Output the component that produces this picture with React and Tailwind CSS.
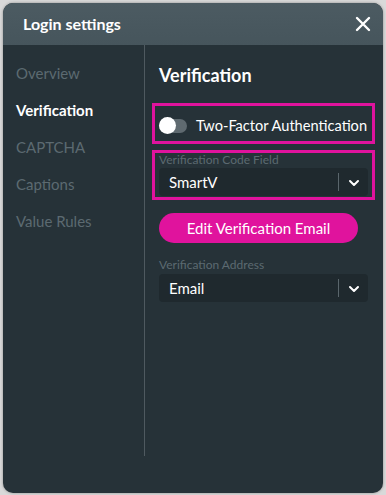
import React from "react";

function Chevron() {
  return (
    <svg width="12" height="8" viewBox="0 0 12 8" fill="none">
      <path d="M2 2l4 4 4-4" stroke="#ffffff" strokeWidth="2" strokeLinecap="round" strokeLinejoin="round" />
    </svg>
  );
}

function Select({ value }) {
  return (
    <div className="flex h-[28px] w-[209px] items-center rounded-[4px] bg-[#1f292e]">
      <div className="flex-1 pl-[10px] text-[15px] text-white">{value}</div>
      <div className="h-[18px] w-px bg-[#5a666c]" />
      <div className="flex w-[29px] items-center justify-center pt-[2px]">
        <Chevron />
      </div>
    </div>
  );
}

export default function App() {
  const nav = ["Overview", "Verification", "CAPTCHA", "Captions", "Value Rules"];
  return (
    <div className="h-[495px] w-[386px] bg-[#d9d9d9] p-[3px]" style={{ fontFamily: "Lato, 'Open Sans', sans-serif" }}>
      <div className="flex h-[490px] w-[380px] flex-col overflow-hidden rounded-[10px] bg-[#263238] shadow-[0_0_3px_rgba(0,0,0,0.35)]">
        <div className="flex h-[42px] items-center justify-between bg-gradient-to-b from-[#4c5b62] to-[#46555c] pl-[20px] pr-[12px]">
          <div className="text-[16px] font-bold text-white">Login settings</div>
          <svg width="16" height="16" viewBox="0 0 16 16">
            <path d="M2 2L14 14M14 2L2 14" stroke="#ffffff" strokeWidth="2.4" strokeLinecap="round" />
          </svg>
        </div>
        <div className="flex flex-1">
          <div className="flex h-[411px] w-[142px] shrink-0 flex-col border-r border-[#4f5a60] pl-[13px] pt-[17px]">
            {nav.map((n) => (
              <div
                key={n}
                className={`h-[37px] whitespace-nowrap text-[15px] ${n === "Verification" ? "font-bold text-white" : "text-[#5c6a71]"}`}
              >
                {n}
              </div>
            ))}
          </div>
          <div className="flex flex-col pl-[7px] pt-[17px]">
            <div className="ml-[7px] h-[41px] text-[18px] font-bold leading-[26px] text-white">Verification</div>
            <div className="flex h-[41px] w-[223px] items-center border-[3px] border-[#e0139d] pl-[4px] pt-[4px]">
              <div className="relative h-[14px] w-[28px] shrink-0 rounded-full bg-[#5f6a70]">
                <div className="absolute left-0 top-[-1.5px] h-[17px] w-[17px] rounded-full bg-white" />
              </div>
              <div className="ml-[9px] whitespace-nowrap text-[14.6px] text-white">Two-Factor Authentication</div>
            </div>
            <div className="mt-[6px] flex h-[50px] w-[223px] flex-col border-[3px] border-[#e0139d] pl-[4px]">
              <div className="mt-[-1px] whitespace-nowrap text-[12px] leading-[16px] text-[#5c6a71]">Verification Code Field</div>
              <Select value="SmartV" />
            </div>
            <div className="ml-[7px] mt-[13px] flex h-[30px] w-[199px] items-center justify-center whitespace-nowrap rounded-full bg-[#e0139d] text-[15px] text-white">
              Edit Verification Email
            </div>
            <div className="ml-[7px] mt-[14px] whitespace-nowrap text-[12px] leading-[16px] text-[#5c6a71]">Verification Address</div>
            <div className="ml-[7px] mt-[1px]">
              <Select value="Email" />
            </div>
          </div>
        </div>
      </div>
    </div>
  );
}
